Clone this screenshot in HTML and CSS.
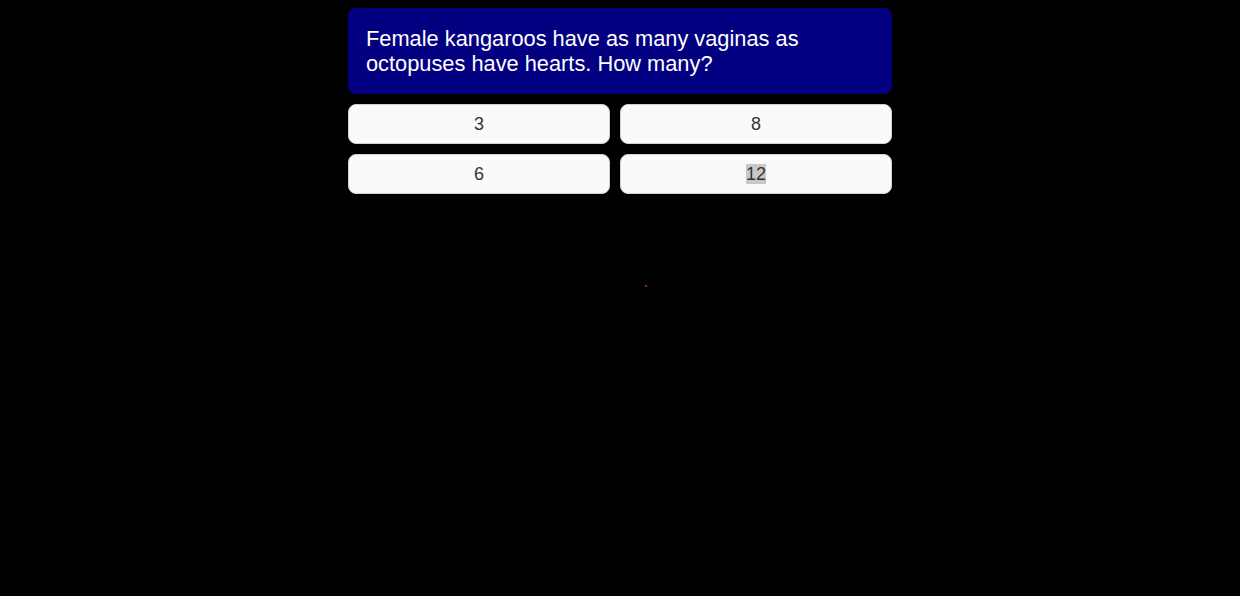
FILE: index.html
```html
<!DOCTYPE html>
<html>
<head>
<meta charset="utf-8">
<link rel="stylesheet" href="styles.css">
</head>
<body>
<div class="quiz">
  <div class="question">Female kangaroos have as many vaginas as octopuses have hearts. How many?</div>
  <div class="answers">
    <button class="answer">3</button>
    <button class="answer">8</button>
    <button class="answer">6</button>
    <button class="answer"><span class="sel">12</span></button>
  </div>
</div>
<div class="dot"></div>
</body>
</html>
```
FILE: styles.css
```css
html, body {
  background: #000;
}
body {
  margin: 8px;
  font-family: "Liberation Sans", Arial, sans-serif;
}
.quiz {
  width: 544px;
  margin: 0 auto;
}
.question {
  background: #020080;
  color: #fff;
  font-size: 21.8px;
  line-height: 25px;
  padding: 18px 18px 18px 18px;
  border-radius: 8px;
  margin-bottom: 10px;
}
.answers {
  display: grid;
  grid-template-columns: 262px 1fr;
  gap: 10px;
}
.answer {
  height: 40px;
  background: #fafafa;
  border: 1px solid #d0d0d0;
  border-radius: 8px;
  font-family: "Liberation Sans", Arial, sans-serif;
  font-size: 18px;
  color: #333;
  padding: 0;
}
.sel {
  background: #c8c8c8;
}
.dot {
  position: absolute;
  left: 645px;
  top: 285px;
  width: 2px;
  height: 2px;
  background: #a02020;
}
```
